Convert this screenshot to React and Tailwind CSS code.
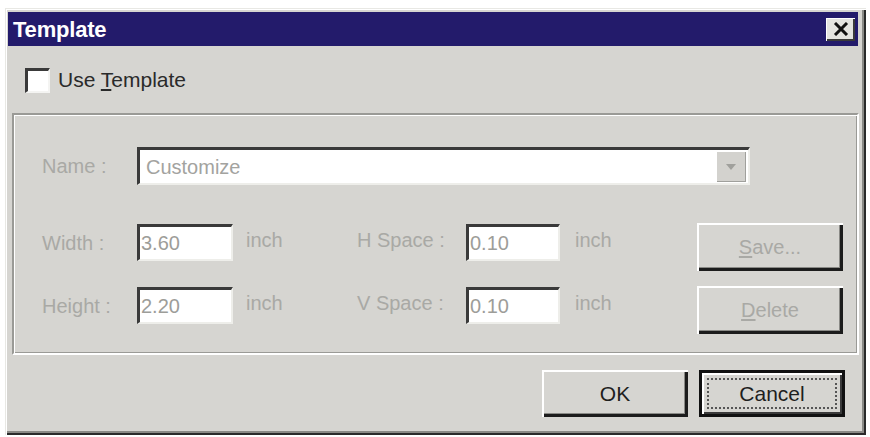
import React from 'react';

const raised = 'bg-[#d6d5d1] shadow-[inset_2px_2px_0_#ffffff,inset_-3px_-3px_0_#1c1c1c,inset_-4px_-4px_0_#8a8a86]';
const sunken = 'bg-white border-t-[3px] border-l-[3px] border-t-[#3a3a3a] border-l-[#3a3a3a] border-b-2 border-r-2 border-b-[#eeeeea] border-r-[#eeeeea]';
const dim = 'text-[#a9a9a5]';

const Field = ({ value, className }) => (
    <div className={`${sunken} h-[37px] flex items-center pl-[1px] ${className}`}>
        <span className="text-[20px] text-[#9d9d99]">{value}</span>
    </div>
);

const App = () => {
    return (
        <div className="w-[870px] h-[437px] bg-white pt-[8px] pl-[5px] font-['Liberation_Sans',Arial,sans-serif] overflow-hidden">
            <div className="w-[861px] h-[427px] bg-[#d6d5d1] pt-[4px] pl-[3px] pr-[4px] flex flex-col shadow-[inset_1px_1px_0_#e8e8e4,inset_2px_2px_0_#ffffff,inset_-2px_-2px_0_#2a2a2a,inset_-4px_-4px_0_#8a8a86]">
                {/* Title bar */}
                <div className="w-[850px] h-[34px] bg-[#231b6b] flex items-center justify-between pl-[5px] pr-[3px]">
                    <span className="text-white font-bold text-[22px] tracking-[-0.2px]">Template</span>
                    <button className="w-[29px] h-[23px] bg-[#e4e4e0] flex items-center justify-center shadow-[inset_1px_1px_0_#ffffff,inset_-2px_-2px_0_#3a3a3a]">
                        <svg width="16" height="14" viewBox="0 0 16 14">
                            <path d="M2 1 L14 13 M14 1 L2 13" stroke="#111" strokeWidth="3" />
                        </svg>
                    </button>
                </div>

                {/* Use template checkbox */}
                <div className="mt-[21px] ml-[17px] h-[26px] flex items-center gap-[8px]">
                    <div className="w-[25px] h-[25px] bg-white border-t-[3px] border-l-[3px] border-t-[#3a3a3a] border-l-[#3a3a3a] border-b-2 border-r-2 border-b-[#f4f4f2] border-r-[#f4f4f2]"></div>
                    <span className="text-[21px] text-[#2a2a2a]">Use <span className="underline underline-offset-2">T</span>emplate</span>
                </div>

                {/* Group box */}
                <div className="mt-[20px] ml-[4px] w-[847px] h-[242px] border-2 border-t-[#9a9a96] border-l-[#9a9a96] border-b-[#ffffff] border-r-[#ffffff] shadow-[inset_1px_1px_0_#ffffff,inset_-1px_-1px_0_#9a9a96] pl-[28px] pr-[14px] pt-[32px] flex flex-col">
                    <div className="flex items-center h-[38px]">
                        <span className={`w-[95px] text-[20px] ${dim}`}>Name :</span>
                        <div className={`${sunken} w-[613px] h-[38px] flex items-center justify-between pl-[6px] pr-[2px]`}>
                            <span className="text-[20px] text-[#a3a39f]">Customize</span>
                            <div className="w-[30px] h-[31px] bg-[#d3d2ce] flex items-center justify-center shadow-[inset_1px_1px_0_#ffffff,inset_-1px_-1px_0_#a0a09c]">
                                <svg width="10" height="6" viewBox="0 0 10 6">
                                    <path d="M0 0 H10 L5 6 Z" fill="#a0a09c" />
                                </svg>
                            </div>
                        </div>
                    </div>

                    <div className="mt-[39px] flex justify-between">
                        <div className="flex flex-col gap-[26px]">
                            <div className="flex items-center">
                                <span className={`w-[95px] text-[20px] ${dim}`}>Width :</span>
                                <Field value="3.60" className="w-[96px]" />
                                <span className={`w-[124px] pl-[13px] text-[20px] ${dim} -mt-[6px]`}>inch</span>
                                <span className={`w-[109px] text-[20px] ${dim} -mt-[6px]`}>H Space :</span>
                                <Field value="0.10" className="w-[94px]" />
                                <span className={`pl-[15px] text-[20px] ${dim} -mt-[6px]`}>inch</span>
                            </div>
                            <div className="flex items-center">
                                <span className={`w-[95px] text-[20px] ${dim}`}>Height :</span>
                                <Field value="2.20" className="w-[96px]" />
                                <span className={`w-[124px] pl-[13px] text-[20px] ${dim} -mt-[6px]`}>inch</span>
                                <span className={`w-[109px] text-[20px] ${dim} -mt-[6px]`}>V Space :</span>
                                <Field value="0.10" className="w-[94px]" />
                                <span className={`pl-[15px] text-[20px] ${dim} -mt-[6px]`}>inch</span>
                            </div>
                        </div>
                        <div className="flex flex-col gap-[15px] -mt-[1px]">
                            <button className={`${raised} w-[146px] h-[48px] text-[20px] ${dim}`}>
                                <span className="underline underline-offset-2">S</span>ave...
                            </button>
                            <button className={`${raised} w-[146px] h-[48px] text-[20px] ${dim}`}>
                                <span className="underline underline-offset-2">D</span>elete
                            </button>
                        </div>
                    </div>
                </div>

                {/* Bottom buttons */}
                <div className="mt-[15px] mr-[17px] flex justify-end gap-[11px]">
                    <button className={`${raised} w-[146px] h-[47px] text-[21px] text-[#1e1e1e]`}>OK</button>
                    <button className="w-[146px] h-[47px] border-[3px] border-[#111] bg-[#d6d5d1] shadow-[inset_2px_2px_0_#ffffff,inset_-2px_-2px_0_#3a3a3a] p-[5px]">
                        <div className="w-full h-full border-2 border-dotted border-[#555] flex items-center justify-center text-[21px] text-[#1e1e1e]">
                            Cancel
                        </div>
                    </button>
                </div>
            </div>
        </div>
    );
};

export default App;
